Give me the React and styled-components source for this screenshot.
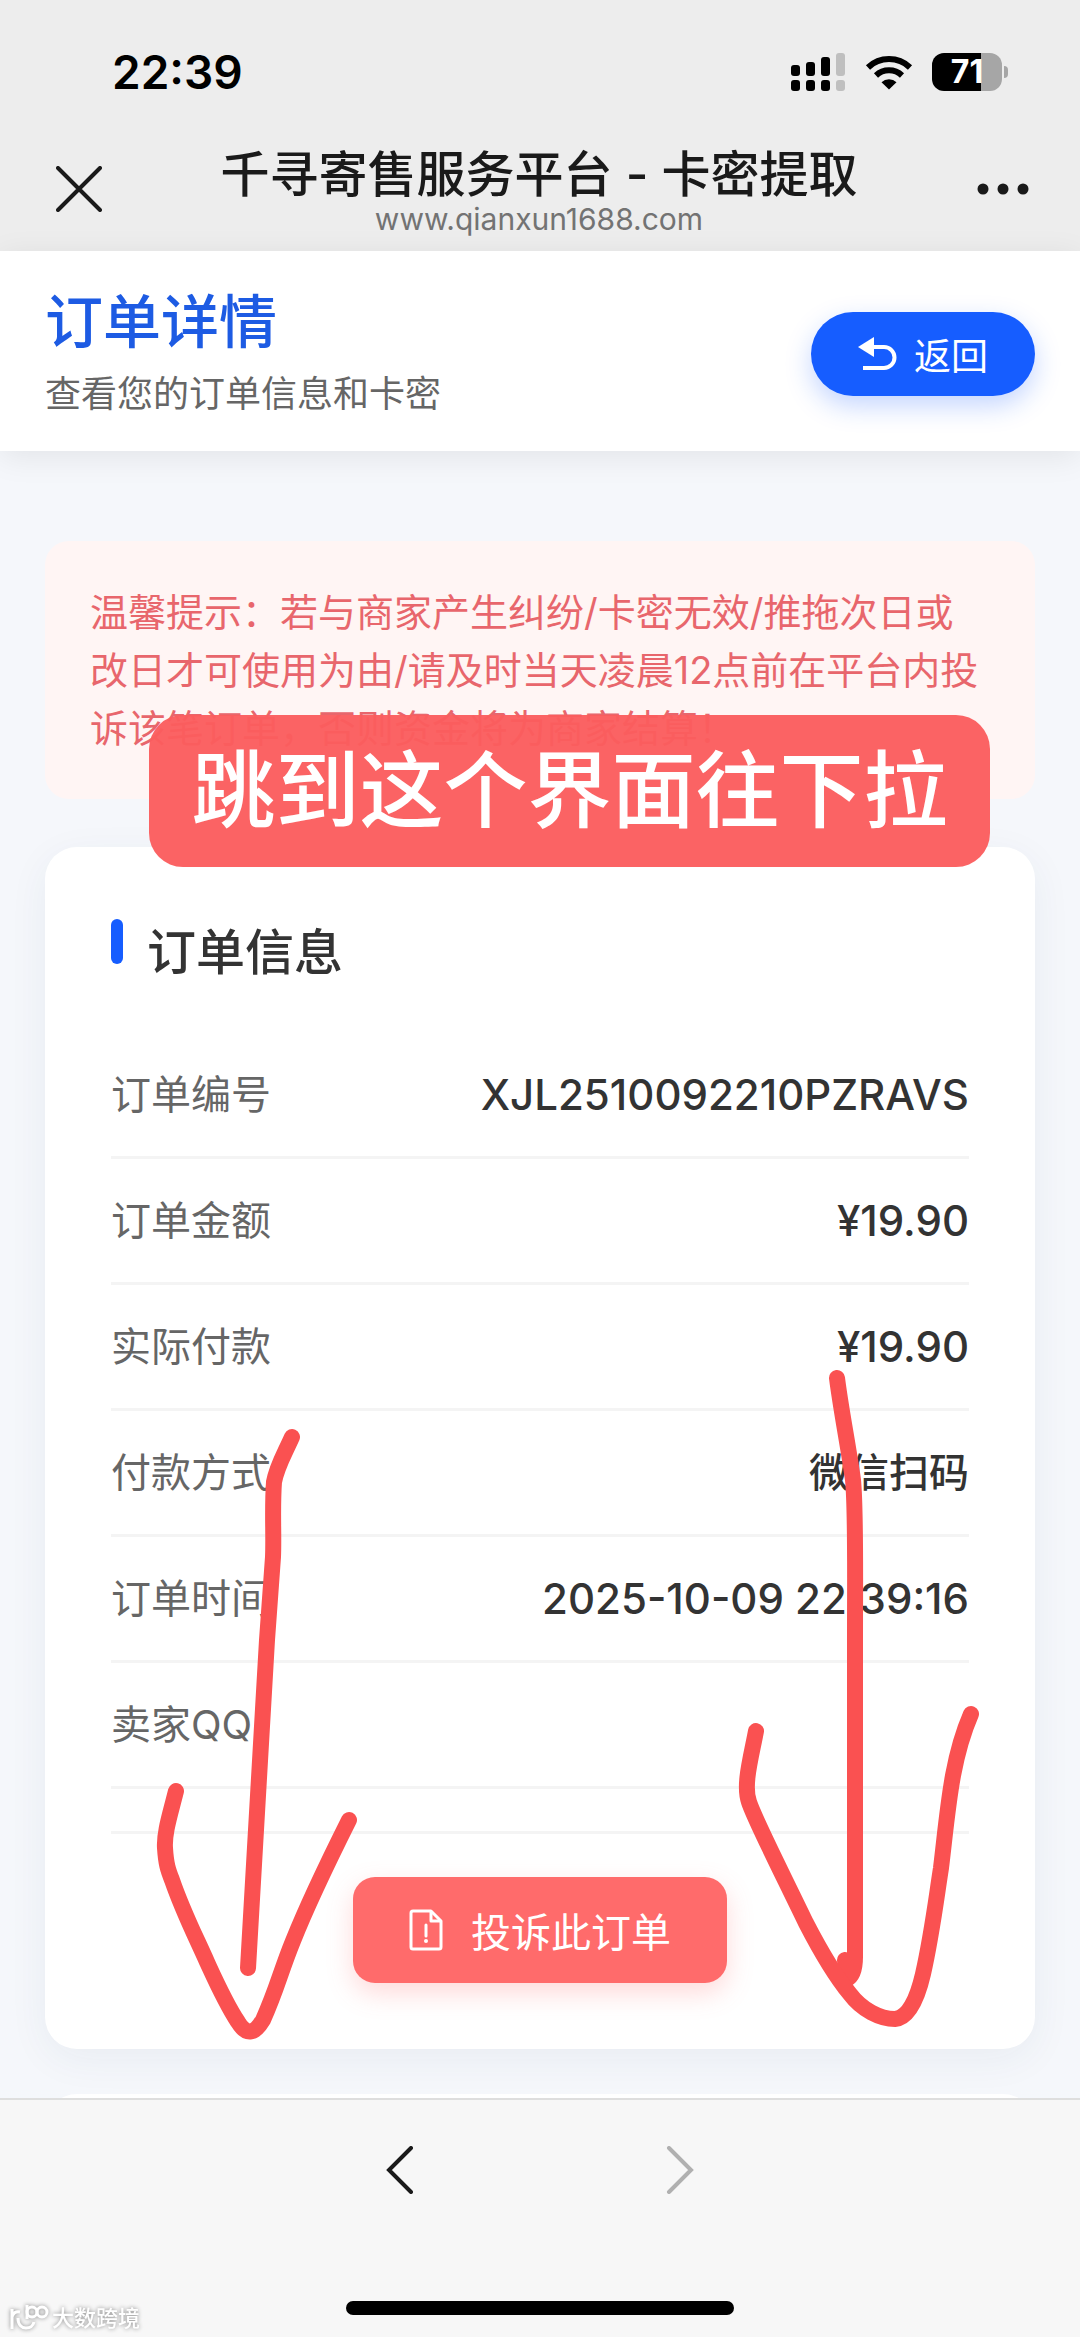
import styled, { createGlobalStyle } from 'styled-components';

const rows = [
    { label: '订单编号', value: 'XJL2510092210PZRAVS', numeric: true },
    { label: '订单金额', value: '¥19.90', numeric: true },
    { label: '实际付款', value: '¥19.90', numeric: true },
    { label: '付款方式', value: '微信扫码' },
    { label: '订单时间', value: '2025-10-09 22:39:16', numeric: true },
    { label: '卖家QQ', value: '' },
];

const SignalIcon = () => (
    <svg width='56' height='40' viewBox='0 0 56 40' aria-hidden='true'>
        <g fill='#000'>
            <rect x='1' y='13' width='9' height='11' rx='3' />
            <rect x='16' y='10' width='9' height='14' rx='3' />
            <rect x='31' y='5' width='9' height='19' rx='3' />
            <rect x='1' y='28' width='9' height='11' rx='3' />
            <rect x='16' y='28' width='9' height='11' rx='3' />
            <rect x='31' y='28' width='9' height='11' rx='3' />
        </g>
        <g fill='#bfbfbf'>
            <rect x='46' y='1' width='9' height='23' rx='3' />
            <rect x='46' y='28' width='9' height='11' rx='3' />
        </g>
    </svg>
);

const WifiIcon = () => (
    <svg width='48' height='36' viewBox='0 0 48 36' aria-hidden='true'>
        <g fill='none' stroke='#000' strokeWidth='6'>
            <path d='M3 13.5a30.5 30.5 0 0 1 42 0' />
            <path d='M11 21.500a19 19 0 0 1 26 0' />
        </g>
        <path d='M24 35.500l-7.500-7.300a11 11 0 0 1 15 0z' />
    </svg>
);

const App = () => {
    return (
        <Page>
            <GlobalStyle />
            <TopBar>
                <StatusBar>
                    <Clock>22:39</Clock>
                    <StatusIcons>
                        <SignalIcon />
                        <WifiIcon />
                        <BatteryWrap>
                            <Battery>71</Battery>
                            <BatteryTip />
                        </BatteryWrap>
                    </StatusIcons>
                </StatusBar>
                <NavBar>
                    <IconButton aria-label='关闭'>
                        <svg width='46' height='46' viewBox='0 0 46 46'>
                            <path d='M2 2L44 44M44 2L2 44' stroke='#1a1a1a' strokeWidth='4' strokeLinecap='round' />
                        </svg>
                    </IconButton>
                    <NavTitle>
                        <h1>千寻寄售服务平台 - 卡密提取</h1>
                        <p>www.qianxun1688.com</p>
                    </NavTitle>
                    <IconButton aria-label='更多'>
                        <svg width='54' height='46' viewBox='0 0 54 46'>
                            <g fill='#1a1a1a'>
                                <circle cx='7' cy='23' r='5.500' />
                                <circle cx='27' cy='23' r='5.500' />
                                <circle cx='47' cy='23' r='5.500' />
                            </g>
                        </svg>
                    </IconButton>
                </NavBar>
            </TopBar>

            <Header>
                <div>
                    <HeaderTitle>订单详情</HeaderTitle>
                    <HeaderText>查看您的订单信息和卡密</HeaderText>
                </div>
                <BackButton>
                    <svg width='40' height='34' viewBox='0 0 40 34' aria-hidden='true'>
                        <path d='M0 10L16 0v20z' fill='#fff' />
                        <path d='M14 10h12a10.500 10.500 0 0 1 0 21H5' fill='none' stroke='#fff' strokeWidth='4' />
                    </svg>
                    返回
                </BackButton>
            </Header>

            <Main>
                <Notice>
                    温馨提示：若与商家产生纠纷/卡密无效/推拖次日或改日才可使用为由/请及时当天凌晨12点前在平台内投诉该笔订单，否则资金将为商家结算！
                    <Banner>跳到这个界面往下拉</Banner>
                </Notice>

                <Card>
                    <CardTitle>订单信息</CardTitle>
                    <dl>
                        {rows.map((row) => (
                            <Row key={row.label} $numeric={row.numeric}>
                                <dt>{row.label}</dt>
                                <dd>{row.value}</dd>
                            </Row>
                        ))}
                    </dl>
                    <CardFooter>
                        <ComplainButton>
                            <svg width='34' height='42' viewBox='0 0 34 42' aria-hidden='true'>
                                <g fill='none' stroke='#fff' strokeWidth='3' strokeLinejoin='round'>
                                    <path d='M4 2h18l10 10v26a2 2 0 0 1-2 2H4a2 2 0 0 1-2-2V4a2 2 0 0 1 2-2z' />
                                    <path d='M22 2v10h10' />
                                    <path d='M17 16v11' strokeLinecap='round' />
                                </g>
                                <circle cx='17' cy='32' r='2' fill='#fff' />
                            </svg>
                            投诉此订单
                        </ComplainButton>
                    </CardFooter>
                </Card>

                <Peek>
                    <PeekCard />
                </Peek>
            </Main>

            <BottomBar>
                <Pager>
                    <IconButton aria-label='后退'>
                        <svg width='28' height='48' viewBox='0 0 28 48'>
                            <path d='M25 2L3 24l22 22' fill='none' stroke='#1a1a1a' strokeWidth='4' strokeLinecap='round' />
                        </svg>
                    </IconButton>
                    <IconButton aria-label='前进' disabled>
                        <svg width='28' height='48' viewBox='0 0 28 48'>
                            <path d='M3 2l22 22L3 46' fill='none' stroke='#b0b0b0' strokeWidth='4' strokeLinecap='round' />
                        </svg>
                    </IconButton>
                </Pager>
                <HomeIndicator />
                <Watermark>
                    <svg width='40' height='28' viewBox='0 0 40 28' aria-hidden='true'>
                        <g fill='none' stroke='#fff' strokeWidth='3'>
                            <path d='M3 5v20M3 13c1-4 4-6 8-5' />
                            <path d='M9 14c0 7 4 10 8 10s7-2 8-6' />
                            <path d='M18 1v14' />
                            <circle cx='23' cy='8' r='5' />
                            <circle cx='33' cy='8' r='5' />
                        </g>
                    </svg>
                    大数跨境
                </Watermark>
            </BottomBar>

            {/* hand drawn arrows over the page */}
            <Doodle viewBox='0 0 1080 2337' aria-hidden='true'>
                <path d='M292 1437C284 1455 277 1466 274 1482C272 1510 274 1535 273 1557L267 1640L248 1968' />
                <path d='M176 1791C170 1815 164 1833 165 1848C166 1864 168 1870 172 1880C183 1912 195 1935 207 1962C218 1986 226 2004 238 2022Q250 2042 263 2020C277 1989 280 1973 293 1941C305 1911 326 1866 349 1820' />
                <path d='M837 1378C841 1410 849 1450 853 1480C856 1510 855 1570 855 1640V1957Q855 1975 847 1979L845 1960' />
                <path d='M756 1731C751 1758 743 1785 749 1802C754 1818 780 1869 806 1923C822 1954 836 1977 850 1994C862 2010 880 2019 895 2019C908 2018 917 2000 923 1974C932 1934 936 1900 941 1868C948 1810 951 1760 971 1714' />
            </Doodle>
        </Page>
    );
};

export default App;

const GlobalStyle = createGlobalStyle`
    * {
        box-sizing: border-box;
        margin: 0;
        padding: 0;
    }

    body {
        font-family: Inter, 'Noto Sans CJK SC', sans-serif;
        background-color: #f5f7fb;
    }

    svg {
        display: block;
        flex-shrink: 0;
    }

    button {
        font-family: inherit;
        border: none;
        cursor: pointer;
    }
`;

const Page = styled.div`
    position: relative;
    min-height: 100vh;
    display: flex;
    flex-direction: column;
`;

const TopBar = styled.header`
    background-color: #ededed;
    padding: 42px 50px 18px;
`;

const StatusBar = styled.div`
    display: flex;
    justify-content: space-between;
    align-items: center;
    height: 60px;
    padding: 0 22px 0 62px;
`;

const Clock = styled.span`
    font-size: 46px;
    line-height: 60px;
    font-weight: 600;
`;

const StatusIcons = styled.div`
    display: flex;
    align-items: center;
    gap: 19px;
`;

const BatteryWrap = styled.div`
    display: flex;
    align-items: center;
    gap: 2px;
`;

const Battery = styled.div`
    width: 70px;
    height: 38px;
    border-radius: 12px;
    background: linear-gradient(90deg, #000 70%, #a6a6a6 70%);
    color: #fff;
    font-size: 32px;
    line-height: 38px;
    font-weight: 700;
    text-align: center;
`;

const BatteryTip = styled.i`
    width: 4px;
    height: 12px;
    border-radius: 0 4px 4px 0;
    background-color: #a6a6a6;
`;

const NavBar = styled.nav`
    display: flex;
    justify-content: space-between;
    align-items: center;
    padding: 43px 0 0 6px;
`;

const IconButton = styled.button`
    background: none;
`;

const NavTitle = styled.div`
    text-align: center;

    h1 {
        font-size: 49px;
        line-height: 60px;
        font-weight: 500;
        color: #1a1a1a;
    }

    p {
        font-size: 30px;
        line-height: 28px;
        color: #737373;
    }
`;

const Header = styled.section`
    display: flex;
    justify-content: space-between;
    align-items: center;
    padding: 31px 45px 25px;
    background-color: #fff;
    box-shadow: 0 6px 30px rgba(0, 0, 0, 0.08);
`;

const HeaderTitle = styled.h2`
    font-size: 58px;
    line-height: 80px;
    font-weight: 500;
    color: #1d5be3;
`;

const HeaderText = styled.p`
    font-size: 36px;
    line-height: 64px;
    color: #666;
`;

const BackButton = styled.button`
    display: flex;
    align-items: center;
    gap: 16px;
    height: 84px;
    padding: 0 47px;
    border-radius: 42px;
    background-color: #165dff;
    color: #fff;
    font-size: 37px;
    box-shadow: 0 10px 26px rgba(22, 93, 255, 0.25);
`;

const Main = styled.main`
    flex: 1;
    padding: 90px 45px 0;
`;

const Notice = styled.div`
    position: relative;
    padding: 42px 45px;
    border-radius: 24px;
    background-color: #fff5f4;
    color: #e8666c;
    font-size: 38px;
    line-height: 58px;
`;

const Banner = styled.div`
    position: absolute;
    top: 174px;
    left: 104px;
    right: 45px;
    border-radius: 34px;
    background-color: rgba(251, 93, 94, 0.96);
    color: #fff;
    font-size: 84px;
    line-height: 152px;
    font-weight: 500;
    text-align: center;
    white-space: nowrap;
`;

const Card = styled.section`
    margin-top: 48px;
    padding: 72px 66px 66px;
    border-radius: 32px;
    background-color: #fff;
    box-shadow: 0 10px 40px rgba(30, 60, 110, 0.06);
`;

const CardTitle = styled.h3`
    display: flex;
    gap: 24px;
    margin-bottom: 46px;
    font-size: 49px;
    line-height: 68px;
    font-weight: 500;
    color: #333;

    &:before {
        content: '';
        width: 12px;
        height: 45px;
        border-radius: 6px;
        background-color: #165dff;
    }
`;

const Row = styled.div`
    display: flex;
    justify-content: space-between;
    align-items: center;
    height: 126px;
    border-bottom: 3px solid #f4f4f4;
    font-size: 40px;
    line-height: 60px;

    dt {
        color: #666;
    }

    dd {
        font-size: ${({ $numeric }) => ($numeric ? '42px' : '40px')};
        font-weight: 500;
        color: #333;
    }
`;

const CardFooter = styled.div`
    display: flex;
    justify-content: center;
    margin-top: 42px;
    padding-top: 43px;
    border-top: 3px solid #f4f4f4;
`;

const ComplainButton = styled.button`
    display: flex;
    align-items: center;
    gap: 28px;
    height: 106px;
    padding: 0 56px;
    border-radius: 22px;
    background-color: #ff6b6b;
    color: #fff;
    font-size: 40px;
    box-shadow: 0 10px 26px rgba(255, 107, 107, 0.25);
`;

/* top edge of the next card, cut off by the bottom bar */
const Peek = styled.div`
    height: 4px;
    margin-top: 45px;
    overflow: hidden;
`;

const PeekCard = styled.div`
    height: 100px;
    border-radius: 32px;
    background-color: #fff;
`;

const BottomBar = styled.footer`
    position: relative;
    display: flex;
    flex-direction: column;
    justify-content: space-between;
    align-items: center;
    height: 239px;
    padding: 46px 0 22px;
    border-top: 2px solid #dedede;
    background-color: #f7f7f7;
`;

const Pager = styled.div`
    display: flex;
    gap: 252px;
`;

const HomeIndicator = styled.div`
    width: 36%;
    height: 14px;
    border-radius: 7px;
    background-color: #000;
`;

const Watermark = styled.div`
    position: absolute;
    left: 9px;
    bottom: 4px;
    display: flex;
    align-items: center;
    gap: 3px;
    color: #fff;
    font-size: 22px;
    line-height: 30px;
    font-weight: 500;
    filter: drop-shadow(0 0 2px #888);
`;

const Doodle = styled.svg`
    position: absolute;
    top: 0;
    left: 0;
    width: 100%;
    pointer-events: none;
    fill: none;
    stroke: #fa5151;
    stroke-width: 16px;
    stroke-linecap: round;
    stroke-linejoin: round;
`;
